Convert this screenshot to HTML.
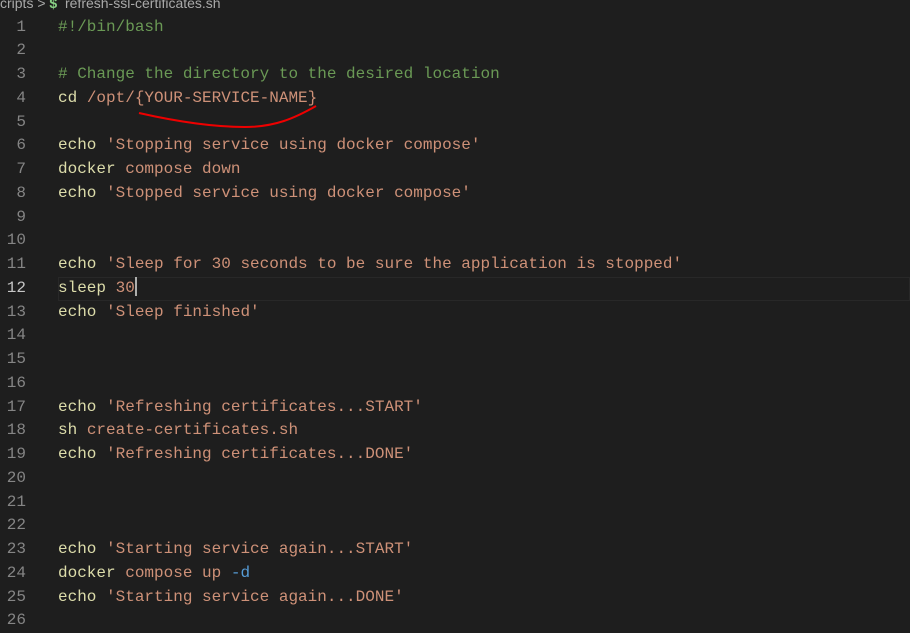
<!DOCTYPE html>
<html><head><style>
body{margin:0;width:910px;height:616px;background:#1e1e1e;overflow:hidden;position:relative;font-family:"Liberation Mono",monospace;font-size:16px}
.crumb{position:absolute;top:-5px;left:0;font-family:"Liberation Sans",sans-serif;font-size:14px;color:#a9a9a9;white-space:pre}
.ed{position:absolute;top:15.5px;left:0;width:910px}
.l{height:23.75px;line-height:23.75px;white-space:pre;position:relative}
.n{position:absolute;left:0;width:26px;text-align:right;color:#858585}
.c{position:absolute;left:58px;color:#d4d4d4}
.cur .n{color:#c6c6c6}
.cur:before{content:"";position:absolute;left:58px;right:0;top:0;bottom:0;border:1px solid #282828}
.f{color:#dcdcaa}.s{color:#ce9178}.m{color:#6a9955}.b{color:#569cd6}
.caret{display:inline-block;width:2px;height:19px;background:#aeafad;vertical-align:middle;margin-top:-3px}
</style></head><body>
<div class="crumb">cripts &gt; <span style="color:#89d185;font-weight:bold">$</span>  refresh-ssl-certificates.sh</div>
<div class="ed">
<div class="l"><span class="n">1</span><span class="c m">#!/bin/bash</span></div>
<div class="l"><span class="n">2</span></div>
<div class="l"><span class="n">3</span><span class="c m"># Change the directory to the desired location</span></div>
<div class="l"><span class="n">4</span><span class="c"><span class="f">cd</span> <span class="s">/opt/{YOUR-SERVICE-NAME}</span></span></div>
<div class="l"><span class="n">5</span></div>
<div class="l"><span class="n">6</span><span class="c"><span class="f">echo</span> <span class="s">'Stopping service using docker compose'</span></span></div>
<div class="l"><span class="n">7</span><span class="c"><span class="f">docker</span> <span class="s">compose down</span></span></div>
<div class="l"><span class="n">8</span><span class="c"><span class="f">echo</span> <span class="s">'Stopped service using docker compose'</span></span></div>
<div class="l"><span class="n">9</span></div>
<div class="l"><span class="n">10</span></div>
<div class="l"><span class="n">11</span><span class="c"><span class="f">echo</span> <span class="s">'Sleep for 30 seconds to be sure the application is stopped'</span></span></div>
<div class="l cur"><span class="n">12</span><span class="c"><span class="f">sleep</span> <span class="s">30</span><span class="caret"></span></span></div>
<div class="l"><span class="n">13</span><span class="c"><span class="f">echo</span> <span class="s">'Sleep finished'</span></span></div>
<div class="l"><span class="n">14</span></div>
<div class="l"><span class="n">15</span></div>
<div class="l"><span class="n">16</span></div>
<div class="l"><span class="n">17</span><span class="c"><span class="f">echo</span> <span class="s">'Refreshing certificates...START'</span></span></div>
<div class="l"><span class="n">18</span><span class="c"><span class="f">sh</span> <span class="s">create-certificates.sh</span></span></div>
<div class="l"><span class="n">19</span><span class="c"><span class="f">echo</span> <span class="s">'Refreshing certificates...DONE'</span></span></div>
<div class="l"><span class="n">20</span></div>
<div class="l"><span class="n">21</span></div>
<div class="l"><span class="n">22</span></div>
<div class="l"><span class="n">23</span><span class="c"><span class="f">echo</span> <span class="s">'Starting service again...START'</span></span></div>
<div class="l"><span class="n">24</span><span class="c"><span class="f">docker</span> <span class="s">compose up</span> <span class="b">-d</span></span></div>
<div class="l"><span class="n">25</span><span class="c"><span class="f">echo</span> <span class="s">'Starting service again...DONE'</span></span></div>
<div class="l"><span class="n">26</span></div>
</div>
<svg style="position:absolute;left:0;top:0" width="910" height="616"><path d="M139 113 C170 120 210 127 245 127 C275 127 295 118 316 106" fill="none" stroke="#e00" stroke-width="2"/></svg>
</body></html>
